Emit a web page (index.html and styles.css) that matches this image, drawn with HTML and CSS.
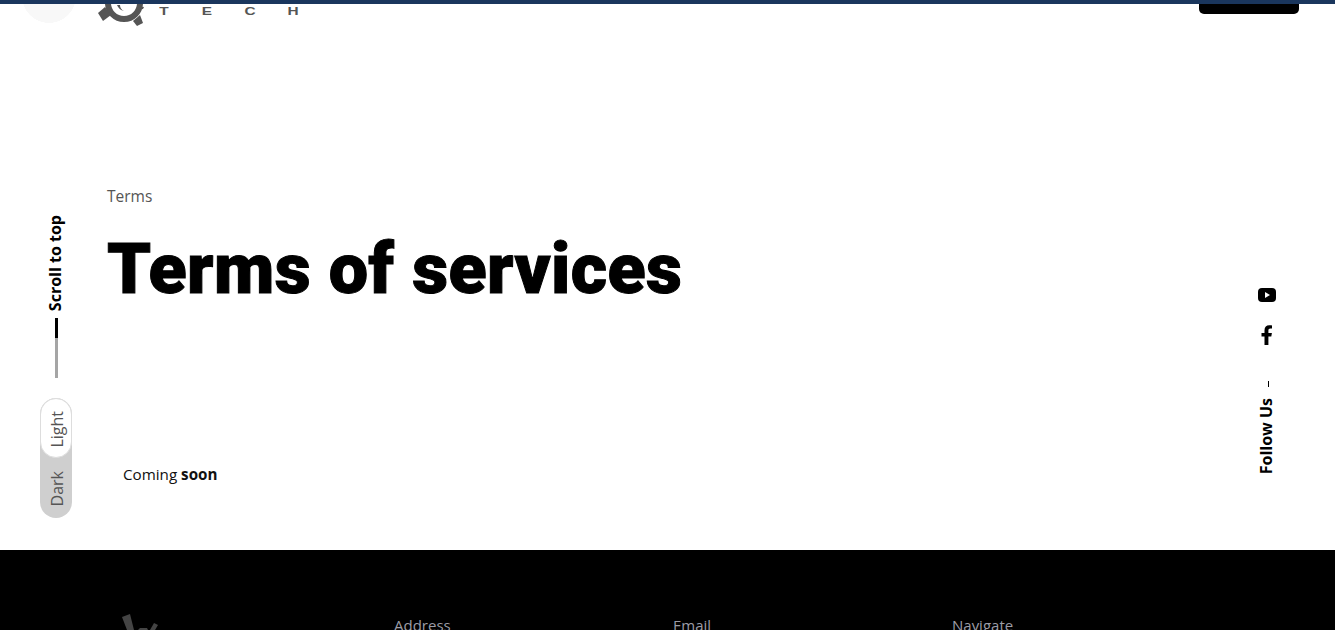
FILE: index.html
```html
<!DOCTYPE html>
<html lang="en">
<head>
    <meta charset="UTF-8">
    <title>Terms of services</title>
    <link rel="stylesheet" href="styles.css">
</head>
<body>
<div class="topbar"></div>
<header class="header">
    <div class="brand">
        <div class="brand-circle"></div>
        <svg class="brand-gear" width="50" height="24" viewBox="0 0 50 24">
            <circle cx="26" cy="-1" r="16" fill="none" stroke="#555" stroke-width="6"/>
            <g fill="#555">
                <path d="M0 9 L7 3 L13 11 L5 17 Z"/>
                <path d="M35 17 L42 11 L45 19 L39 22 Z"/>
                <path d="M40 2 L46 3 L45 5 L40 6 Z"/>
                <path d="M19 1 L22 1 Q22 5 26 7 Q21 6 19 1 Z"/>
            </g>
        </svg>
        <div class="brand-name"><span>T</span><span>E</span><span>C</span><span>H</span></div>
    </div>
    <a class="header-btn"></a>
</header>

<div class="scroll-top">
    <span class="rail-text">Scroll to top</span>
    <div class="scroll-line"></div>
    <div class="mode">
        <div class="mode-item mode-on"><span>Light</span></div>
        <div class="mode-item"><span>Dark</span></div>
    </div>
</div>

<div class="follow">
    <svg class="follow-yt" width="18" height="14" viewBox="0 0 18 14">
        <rect width="18" height="14" rx="4" fill="#000"/>
        <path d="M7 4 L12 7 L7 10 Z" fill="#fff"/>
    </svg>
    <svg class="follow-fb" width="12" height="20" viewBox="0 0 12 20">
        <path d="M3.5 20 V11.5 H0.5 V8 H3.5 V5.2 C3.5 2 5.4 0.3 8.2 0.3 C9.6 0.3 11 0.5 11 0.5 V3.6 H9.5 C7.9 3.6 7.4 4.5 7.4 5.5 V8 H10.9 L10.3 11.5 H7.4 V20 Z" fill="#000"/>
    </svg>
    <div class="follow-dash"></div>
    <span class="rail-text">Follow Us</span>
</div>

<main class="content">
    <div class="crumb">Terms</div>
    <h1 class="title">Terms of services</h1>
    <p class="text">Coming <b>soon</b></p>
</main>

<footer class="footer">
    <div class="foot-col">
        <svg class="foot-logo" width="44" height="16" viewBox="0 0 44 16">
            <g fill="#444">
                <path d="M7 3 L15 0 L19 16 L12 16 Z"/>
                <path d="M23 16 L25 14 L32 14 L33 16 Z"/>
                <path d="M35 16 L39 9 L43 11 L40 16 Z"/>
            </g>
        </svg>
    </div>
    <div class="foot-col">Address</div>
    <div class="foot-col">Email</div>
    <div class="foot-col">Navigate</div>
</footer>
</body>
</html>
```

FILE: styles.css
```css
*{
    margin: 0;
    padding: 0;
    box-sizing: border-box;
}
html,body{
    height: 630px;
    overflow: hidden;
}
body{
    position: relative;
    background: #fff;
    font-family: "Open Sans", "Noto Sans", sans-serif;
    color: #000;
}
.topbar{
    height: 4px;
    background: #1a365d;
}
.header{
    display: flex;
    justify-content: space-between;
    align-items: flex-start;
    height: 32px;
    padding: 0 36px 0 22px;
}
.brand{
    display: flex;
    align-items: flex-start;
}
.brand-circle{
    width: 54px;
    height: 19px;
    background: radial-gradient(circle 27px at 27px -8px, #f8f8f8 99%, transparent);
}
.brand-gear{
    margin-left: 22px;
}
.brand-name{
    display: flex;
    gap: 33px;
    margin: 2px 0 0 11px;
    font-family: "Liberation Sans", sans-serif;
    font-size: 11px;
    line-height: 10px;
    font-weight: bold;
    color: #555;
}
.brand-name span{
    display: block;
    width: 10px;
    text-align: center;
    transform: scaleX(1.4);
}
.header-btn{
    display: block;
    width: 100px;
    height: 10px;
    background: #000;
    border-radius: 0 0 5px 5px;
}

/* side rails */
.rail-text{
    writing-mode: vertical-rl;
    transform: rotate(180deg);
    font-size: 16px;
    line-height: 20px;
    font-weight: 700;
}
.scroll-top{
    position: absolute;
    left: 38px;
    top: 215px;
    width: 36px;
    display: flex;
    flex-direction: column;
    align-items: center;
}
.scroll-top .rail-text{
    margin-right: 2px;
}
.scroll-line{
    width: 3px;
    height: 60px;
    margin-top: 7px;
    background: linear-gradient(#000 0, #000 20px, #a5a5a5 20px);
}
.mode{
    width: 32px;
    height: 120px;
    margin-top: 20px;
    border-radius: 16px;
    background: #cfcfcf;
}
.mode-item{
    display: flex;
    align-items: center;
    justify-content: center;
    height: 60px;
    padding: 2px 0 0 1px;
    font-size: 16px;
    color: #555;
}
.mode-item span{
    writing-mode: vertical-rl;
    transform: rotate(180deg);
}
.mode-on{
    background: #fff;
    border: 1px solid #ddd;
    border-radius: 16px;
}
.follow{
    position: absolute;
    left: 1247px;
    top: 288px;
    width: 40px;
    display: flex;
    flex-direction: column;
    align-items: center;
}
.follow .rail-text{
    margin-right: 2px;
}
.follow-fb{
    margin-top: 23px;
}
.follow-dash{
    width: 1px;
    height: 6px;
    margin: 36px 0 11px 2px;
    background: #000;
}

/* main */
.content{
    height: 514px;
    padding: 148px 0 0 107px;
}
.crumb{
    font-size: 15.5px;
    line-height: 24px;
    color: #555;
}
.title{
    margin-top: 18px;
    font-family: Roboto, "Open Sans", sans-serif;
    font-size: 70px;
    line-height: 86px;
    font-weight: 900;
    letter-spacing: 0.4px;
    -webkit-text-stroke: 1px #000;
}
.text{
    margin: 150px 0 0 16px;
    font-size: 15.2px;
    line-height: 24px;
    color: #111;
}

/* footer */
.footer{
    display: grid;
    grid-template-columns: repeat(4, 279px);
    height: 80px;
    padding: 64px 0 0 115px;
    background: #000;
    color: #9c9ca6;
    font-size: 15px;
    line-height: 22px;
}
.foot-logo{
    display: block;
}
```
